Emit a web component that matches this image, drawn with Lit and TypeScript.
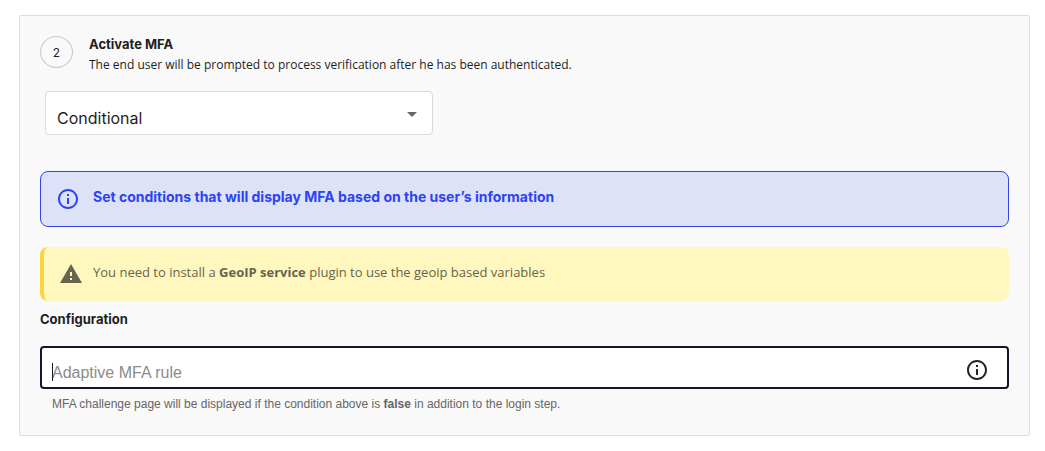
import { LitElement, html, css, svg } from "lit";
import { customElement, property, state } from "lit/decorators.js";

const infoIcon = svg`<path fill="currentColor" d="M11 7h2v2h-2zm0 4h2v6h-2zm1-9C6.480 2 2 6.480 2 12s4.480 10 10 10 10-4.480 10-10S17.520 2 12 2zm0 18c-4.410 0-8-3.590-8-8s3.590-8 8-8 8 3.590 8 8-3.590 8-8 8z"/>`;
const warningIcon = svg`<path fill="currentColor" d="M1 21h22L12 2 1 21zm12-3h-2v-2h2v2zm0-4h-2v-4h2v4z"/>`;

@customElement("notice-box")
export class NoticeBox extends LitElement {
  @property({ reflect: true }) kind: "info" | "warning" = "info";

  static styles = css`
    :host {
      display: flex;
      align-items: center;
      gap: 13px;
      box-sizing: border-box;
      min-height: 56px;
      padding: 0 15px;
      border: 1px solid #3145e8;
      border-radius: 8px;
      background: #dee2f8;
      color: #2c43f5;
      font-size: 14px;
      line-height: 20px;
      font-weight: 700;
    }
    :host([kind="warning"]) {
      gap: 10px;
      min-height: 54px;
      border: 0;
      border-left: 4px solid #ffd43b;
      background: #fff7be;
      color: #66654f;
      font-family: "Open Sans", "Liberation Sans", sans-serif;
      font-size: 13px;
      font-weight: 400;
    }
    .icon {
      flex: none;
      width: 24px;
      height: 24px;
    }
    .text {
      padding-bottom: 4px;
    }
  `;

  render() {
    return html`
      <svg class="icon" viewBox="0 0 24 24" aria-hidden="true">
        ${this.kind === "info" ? infoIcon : warningIcon}
      </svg>
      <div class="text"><slot></slot></div>
    `;
  }
}

@customElement("app-root")
export class AppRoot extends LitElement {
  @state() private rule = "";

  static styles = css`
    :host {
      display: block;
      padding: 15px 15px 15px 19px;
      background: #fff;
      color: #1e1e1e;
      font-family: "Inter", "Liberation Sans", sans-serif;
    }
    .panel {
      padding: 20px;
      border: 1px solid #dedede;
      border-radius: 2px;
      background: #f9f9f9;
    }
    .step {
      display: flex;
      align-items: flex-start;
      gap: 16px;
    }
    .number {
      display: flex;
      flex: none;
      align-items: center;
      justify-content: center;
      box-sizing: border-box;
      width: 33px;
      height: 32px;
      border: 1px solid #c8c8c8;
      border-radius: 50%;
      font-size: 12px;
    }
    .title,
    .section {
      margin: 0;
      font-size: 13px;
      line-height: 20px;
      font-weight: 700;
    }
    .title {
      line-height: 16px;
    }
    .description {
      margin: 3px 0 0;
      font: 12px/20px "Open Sans", "Liberation Sans", sans-serif;
    }
    .select {
      display: grid;
      align-items: center;
      width: 40%;
      height: 44px;
      margin: 16px 5px 36px;
    }
    .select select,
    .select svg {
      grid-area: 1 / 1;
    }
    .select select {
      appearance: none;
      width: 100%;
      height: 100%;
      padding: 9px 36px 0 11px;
      border: 1px solid #dadada;
      border-radius: 4px;
      background: #fff;
      color: inherit;
      font: 16px "Inter", "Liberation Sans", sans-serif;
    }
    .select svg {
      justify-self: end;
      width: 10px;
      height: 5px;
      margin: 2px 16px 0 0;
      color: #666;
      pointer-events: none;
    }
    .notices {
      display: grid;
      gap: 20px;
    }
    .section {
      display: block;
      margin: 8px 0 17px;
    }
    .field {
      position: relative;
      display: flex;
      align-items: center;
      box-sizing: border-box;
      height: 43px;
      padding: 0 18px 0 10px;
      border: 2px solid #15152f;
      border-radius: 4px;
      background: #fff;
    }
    .field input {
      flex: 1;
      min-width: 0;
      height: 100%;
      box-sizing: border-box;
      padding: 10px 0 0;
      border: 0;
      outline: 0;
      background: none;
      color: inherit;
      font: 16px "Liberation Sans", sans-serif;
    }
    .field input::placeholder {
      color: #8b8b8b;
    }
    .caret {
      position: absolute;
      left: 10px;
      top: 15px;
      width: 1px;
      height: 18px;
      background: #15152f;
    }
    .help {
      display: flex;
      padding: 4px 0 0;
      border: 0;
      background: none;
      color: #222;
    }
    .help svg {
      width: 24px;
      height: 24px;
    }
    .hint {
      margin: 5px 12px 1px;
      color: #666;
      font: 12px/20px "Liberation Sans", sans-serif;
    }
  `;

  private onInput(event: Event) {
    this.rule = (event.target as HTMLInputElement).value;
  }

  render() {
    return html`
      <section class="panel">
        <header class="step">
          <span class="number">2</span>
          <div>
            <h2 class="title">Activate MFA</h2>
            <p class="description">
              The end user will be prompted to process verification after he has been authenticated.
            </p>
          </div>
        </header>

        <div class="select">
          <select aria-label="Activate MFA">
            <option>Conditional</option>
          </select>
          <svg viewBox="0 0 10 5" aria-hidden="true"><path fill="currentColor" d="M0 0h10L5 5z" /></svg>
        </div>

        <div class="notices">
          <notice-box kind="info">Set conditions that will display MFA based on the user’s information</notice-box>
          <notice-box kind="warning">
            You need to install a <b>GeoIP service</b> plugin to use the geoip based variables
          </notice-box>
        </div>

        <label class="section" for="rule">Configuration</label>
        <div class="field">
          <input
            id="rule"
            type="text"
            placeholder="Adaptive MFA rule"
            aria-describedby="rule-hint"
            .value=${this.rule}
            @input=${this.onInput}
          />
          ${this.rule ? null : html`<span class="caret"></span>`}
          <button class="help" type="button" aria-label="Rule syntax">
            <svg viewBox="0 0 24 24" aria-hidden="true">${infoIcon}</svg>
          </button>
        </div>
        <p class="hint" id="rule-hint">
          MFA challenge page will be displayed if the condition above is <b>false</b> in addition to the login step.
        </p>
      </section>
    `;
  }
}
